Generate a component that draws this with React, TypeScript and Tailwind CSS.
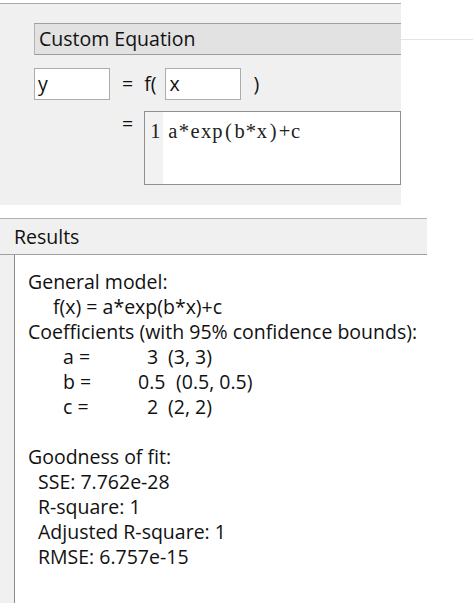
const ui = { fontFamily: '"Open Sans", "Noto Sans", sans-serif' };
const serifMono = { fontFamily: '"Liberation Serif", "DejaVu Serif", serif' };

// SimSun-style fixed cells for the equation editor
function MonoText({ text }: { text: string }) {
  return (
    <span className="flex">
      {text.split("").map((ch, i) => (
        <span key={i} className="inline-block w-[11.17px] text-center">
          {ch}
        </span>
      ))}
    </span>
  );
}

function Coef({ name, value, valueLeft, bounds, boundsLeft }: { name: string; value: string; valueLeft: number; bounds: string; boundsLeft: number }) {
  return (
    <div className="relative h-[25px]">
      <span className="absolute left-[48px]">{name}</span>
      <span className="absolute" style={{ left: valueLeft - 15 }}>{value}</span>
      <span className="absolute" style={{ left: boundsLeft - 15 }}>{bounds}</span>
    </div>
  );
}

export default function App() {
  return (
    <div className="relative h-[603px] w-[473px] overflow-hidden bg-white text-[#111]" style={ui}>
      <div className="absolute right-0 top-[39px] h-px w-[77px] bg-[#e4e4e4]" />

      {/* custom equation panel */}
      <section className="relative mt-[3px] h-[202px] w-[401px] overflow-hidden border-t border-[#a8a8a8] bg-[#f0f0f0] pl-[34px] pt-[19px]">
        <div className="flex h-[32px] w-[400px] items-center border border-[#b4b4b4] border-t-[#a0a0a0] border-b-[#9c9c9c] bg-[#e2e2e2] pl-[4px] text-[19.5px]">
          Custom Equation
        </div>

        <div className="mt-[13px] flex h-[32px] items-center text-[19.5px]">
          <div className="flex h-[32px] w-[76px] items-center border border-[#adadad] bg-white pl-[3px]">y</div>
          <span className="ml-[12px]">=</span>
          <span className="ml-[11px]">f(</span>
          <div className="ml-[9px] flex h-[32px] w-[76px] items-center border border-[#adadad] bg-white pl-[3px]">x</div>
          <span className="ml-[12px]">)</span>
        </div>

        <div className="mt-[11px] flex">
          <span className="ml-[88px] mt-[1px] text-[19.5px] leading-[24px]">=</span>
          <div className="ml-[11px] flex h-[74px] w-[300px] border border-[#8f8f8f] bg-white text-[20.5px] leading-[22px] text-[#222]" style={serifMono}>
            <div className="w-[18px] bg-[#f2f2f2] pl-[5px] pt-[8px]">1</div>
            <div className="pl-[4px] pt-[8px]">
              <MonoText text="a*exp(b*x)+c" />
            </div>
          </div>
        </div>
      </section>

      {/* results panel */}
      <section className="mt-[13px] flex h-[385px] w-[427px] flex-col border-t border-[#b0b0b0] bg-[#f0f0f0]">
        <div className="flex h-[36px] items-center border-b border-[#a0a0a0] pl-[14px] text-[19.5px]">Results</div>
        <div className="ml-[14px] flex-1 border-l border-[#8c8c8c] bg-white pt-[14px] text-[19.5px] leading-[25px]">
          <div className="pl-[13px]">General model:</div>
          <div className="pl-[38px]">f(x) = a*exp(b*x)+c</div>
          <div className="pl-[13px]">Coefficients (with 95% confidence bounds):</div>
          <Coef name="a =" value="3" valueLeft={147} bounds="(3, 3)" boundsLeft={168} />
          <Coef name="b =" value="0.5" valueLeft={138} bounds="(0.5, 0.5)" boundsLeft={176} />
          <Coef name="c =" value="2" valueLeft={147} bounds="(2, 2)" boundsLeft={168} />
          <div className="h-[25px]" />
          <div className="pl-[13px]">Goodness of fit:</div>
          <div className="pl-[23px]">SSE: 7.762e-28</div>
          <div className="pl-[23px]">R-square: 1</div>
          <div className="pl-[23px]">Adjusted R-square: 1</div>
          <div className="pl-[23px]">RMSE: 6.757e-15</div>
        </div>
      </section>
    </div>
  );
}
